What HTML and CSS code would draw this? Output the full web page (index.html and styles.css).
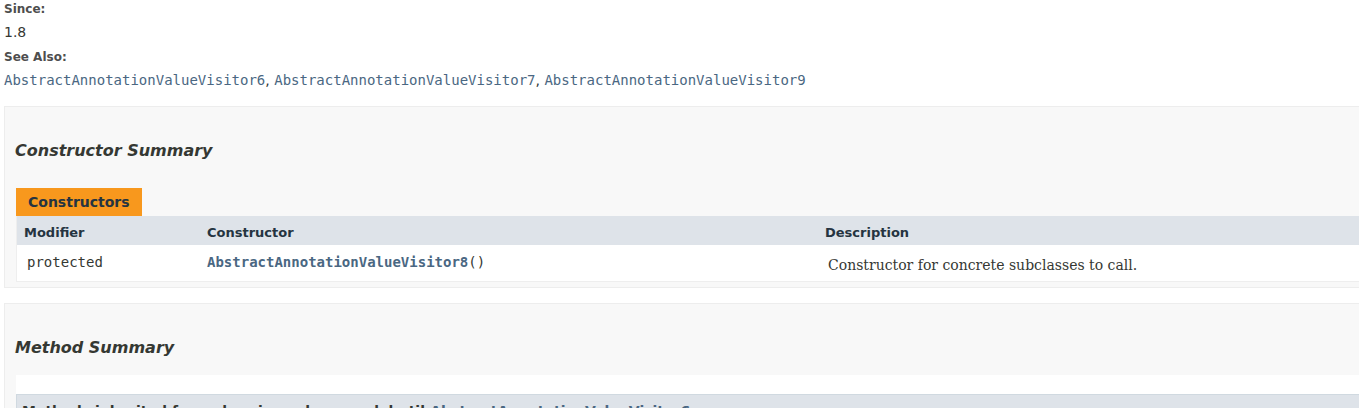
FILE: index.html
```html
<!DOCTYPE html>
<html lang="en">
<head>
<meta charset="utf-8">
<title>AbstractAnnotationValueVisitor8</title>
<link rel="stylesheet" href="styles.css">
</head>
<body>
<div class="page">
  <dl class="notes">
    <dt>Since:</dt>
    <dd>1.8</dd>
    <dt>See Also:</dt>
    <dd><a class="code" href="#">AbstractAnnotationValueVisitor6</a>, <a class="code" href="#">AbstractAnnotationValueVisitor7</a>, <a class="code" href="#">AbstractAnnotationValueVisitor9</a></dd>
  </dl>

  <section class="block">
    <h3 class="block-title">Constructor Summary</h3>
    <div class="member-table">
      <div class="caption"><span class="caption-tab">Constructors</span></div>
      <div class="grid">
        <div class="th">Modifier</div>
        <div class="th">Constructor</div>
        <div class="th">Description</div>
        <div class="td first code">protected</div>
        <div class="td name code"><a class="member-link" href="#">AbstractAnnotationValueVisitor8</a>()</div>
        <div class="td last"><div class="desc">Constructor for concrete subclasses to call.</div></div>
      </div>
    </div>
  </section>

  <section class="block">
    <h3 class="block-title">Method Summary</h3>
    <div class="inherited">
      <h3 class="inherited-title">Methods inherited from class&nbsp;javax.lang.model.util.<a href="#">AbstractAnnotationValueVisitor6</a></h3>
    </div>
  </section>
</div>
</body>
</html>
```

FILE: styles.css
```css
html, body {
  margin: 0;
  padding: 0;
  background: #ffffff;
  overflow: hidden;
}

body {
  font-family: 'DejaVu Sans', Arial, Helvetica, sans-serif;
  font-size: 14px;
  color: #353833;
}

a {
  color: #4a6782;
  text-decoration: none;
}

.code {
  font-family: 'DejaVu Sans Mono', monospace;
  font-size: 14px;
}

.page {
  width: 1500px;
  padding-left: 4px;
  padding-top: 1px;
}

/* notes */
.notes {
  margin: 0;
}

.notes dt {
  margin: 0;
  font-size: 12px;
  line-height: 16.8px;
  font-weight: bold;
  color: #4e4e4e;
}

.notes dd {
  margin: 5px 0 7px 0;
  font-size: 14px;
  line-height: 19.6px;
}

/* summary blocks */
.block {
  margin-top: 15px;
  border: 1px solid #ededed;
  background: #f8f8f8;
  padding: 0 20px 5px 11px;
}

.block-title {
  margin: 34px 0 0 -1px;
  font-size: 16px;
  line-height: 20px;
  font-style: italic;
  font-weight: bold;
  color: #353833;
}

.member-table {
  margin-top: 27px;
}

.caption {
  display: flex;
}

.caption-tab {
  background: #f8981d;
  color: #253441;
  font-weight: bold;
  font-size: 14px;
  line-height: 16px;
  padding: 6px 12px 6px 12px;
}

.grid {
  display: grid;
  grid-template-columns: 183px 618px 1fr;
  border-left: 1px solid #eeeeee;
  border-bottom: 1px solid #eeeeee;
}

.th {
  background: #dee3e9;
  color: #253441;
  font-weight: bold;
  font-size: 13px;
  line-height: 18.2px;
  padding: 8px 3px 3px 7px;
}

.td {
  background: #ffffff;
  line-height: 19.6px;
  padding: 8px 3px 3px 10px;
}

.td.name {
  padding-left: 7px;
}

.member-link {
  font-weight: bold;
}

.desc {
  margin: 3px 10px 2px 0;
  font-family: 'DejaVu Serif', Georgia, 'Times New Roman', serif;
  font-size: 14px;
  line-height: 19.6px;
}

/* inherited */
.inherited {
  margin-top: 17px;
  background: #ffffff;
  padding-top: 19px;
}

.inherited-title {
  margin: 0;
  background: #dee3e9;
  border: 1px solid #d0d9e0;
  padding: 7px 5px;
  font-size: 14px;
  line-height: 19.6px;
  font-weight: bold;
  font-style: normal;
  color: #353833;
}
```
